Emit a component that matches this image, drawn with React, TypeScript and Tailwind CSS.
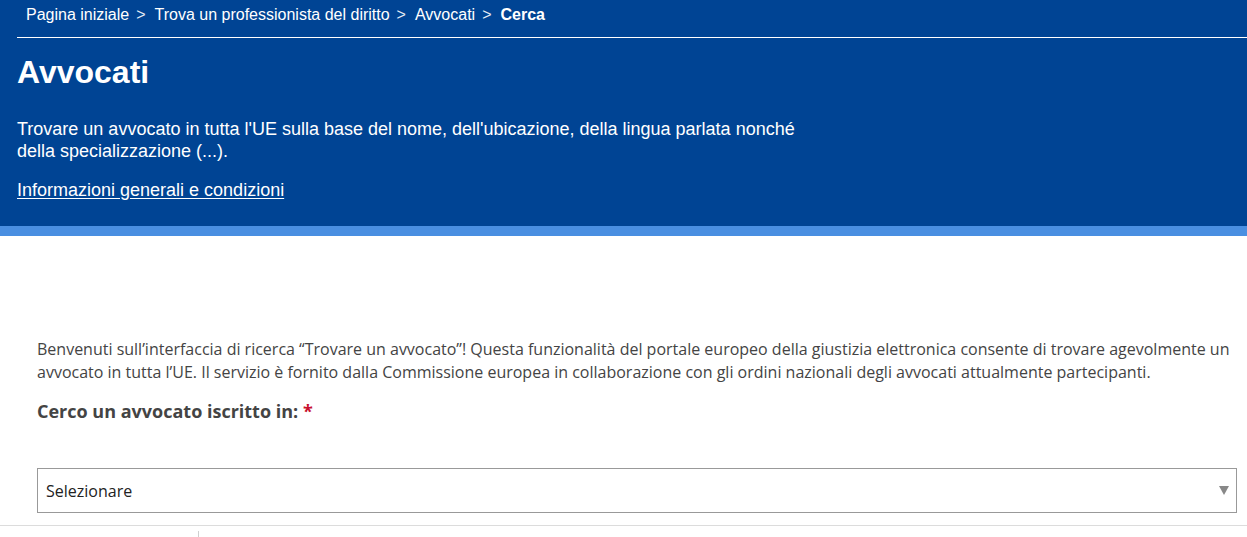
export default function App() {
  return (
    <div className="w-[1247px] h-[537px] overflow-hidden bg-white">
      {/* Blue header */}
      <header className="bg-[#004494] text-white font-['Liberation_Sans',Arial,sans-serif]">
        <nav aria-label="Breadcrumb" className="pl-[26px] pt-[5px] h-[37px] text-[16px] leading-[20px]">
          <ol className="flex items-center">
            <li>Pagina iniziale</li>
            <li className="px-[7px] text-[#e6ecf5]">&gt;</li>
            <li className="pl-[2px]">Trova un professionista del diritto</li>
            <li className="px-[7px] text-[#e6ecf5]">&gt;</li>
            <li className="pl-[2px]">Avvocati</li>
            <li className="px-[7px] text-[#e6ecf5]">&gt;</li>
            <li className="pl-[2px] font-bold">Cerca</li>
          </ol>
        </nav>
        <div className="ml-[17px] border-t border-white" />
        <div className="px-[17px] pt-[15px] pb-[23px]">
          <h1 className="text-[32px] leading-[38px] font-bold">Avvocati</h1>
          <p className="mt-[27px] max-w-[800px] text-[18px] leading-[22px]">
            Trovare un avvocato in tutta l'UE sulla base del nome, dell'ubicazione, della lingua parlata nonché della
            specializzazione (...).
          </p>
          <a href="#" className="mt-[17px] inline-block text-[18px] leading-[22px] underline underline-offset-2">
            Informazioni generali e condizioni
          </a>
        </div>
      </header>
      <div className="h-[10px] bg-[#4a8fe1]" />

      {/* Content */}
      <main className="pl-[37px] pr-[10px] pt-[102px] font-['Open_Sans',sans-serif] text-[#444]">
        <p className="text-[16px] leading-[23px]">
          Benvenuti sull’interfaccia di ricerca “Trovare un avvocato”! Questa funzionalità del portale europeo della
          giustizia elettronica consente di trovare agevolmente un avvocato in tutta l’UE. Il servizio è fornito dalla
          Commissione europea in collaborazione con gli ordini nazionali degli avvocati attualmente partecipanti.
        </p>
        <label className="block mt-[15px] text-[18px] leading-[24px] font-bold">
          Cerco un avvocato iscritto in: <span className="text-[#c8102e]">*</span>
        </label>
        <div className="mt-[45px] h-[45px] border border-[#999] flex items-center justify-between pl-[8px] pr-[7px]">
          <span className="text-[16px] text-[#222]">Selezionare</span>
          <svg width="10" height="9" viewBox="0 0 10 9" aria-hidden="true">
            <path d="M0 0 H10 L5 9 Z" fill="#888" />
          </svg>
        </div>
      </main>
      <div className="mt-[12px] border-t border-[#dcdcdc]" />
      <div className="ml-[198px] mt-[5px] w-px h-[8px] bg-[#d0d0d0]" />
    </div>
  );
}
